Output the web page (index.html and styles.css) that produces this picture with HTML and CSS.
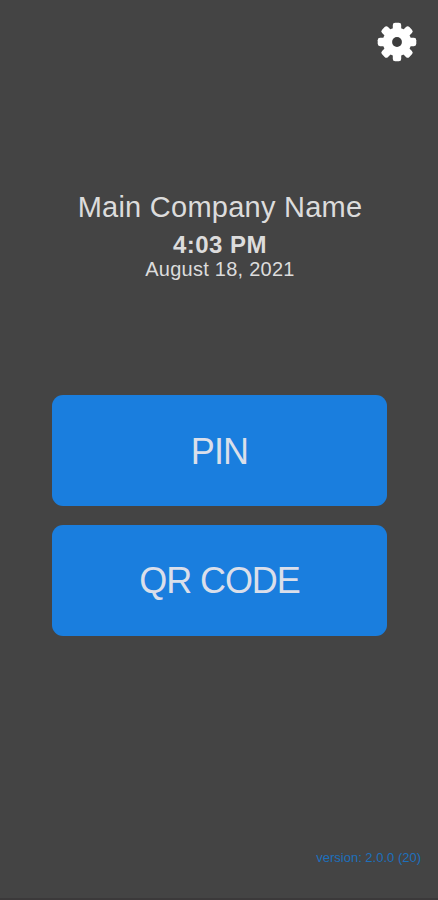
FILE: index.html
```html
<!DOCTYPE html>
<html lang="en">
<head>
<meta charset="utf-8">
<title>Main Company Name</title>
<link rel="stylesheet" href="styles.css">
</head>
<body>
<div class="screen">
  <header class="topbar">
    <button class="settings" aria-label="Settings">
      <svg viewBox="-20 -20 40 40">
        <g class="teeth">
          <rect id="tooth" x="-4.2" y="-19.3" width="8.4" height="38.6" rx="2.4"/>
          <use href="#tooth" transform="rotate(45)"/>
          <use href="#tooth" transform="rotate(90)"/>
          <use href="#tooth" transform="rotate(135)"/>
          <circle r="14.2"/>
        </g>
        <circle class="hub" r="4.9"/>
      </svg>
    </button>
  </header>
  <section class="info">
    <h1 class="company"><span>Main Company Name</span></h1>
    <p class="time"><span>4:03 PM</span></p>
    <p class="date"><span>August 18, 2021</span></p>
  </section>
  <main class="actions">
    <button class="action pin"><span>PIN</span></button>
    <button class="action qr"><span>QR CODE</span></button>
  </main>
  <footer class="version"><span>version: 2.0.0 (20)</span></footer>
</div>
</body>
</html>
```
FILE: styles.css
```css
* { box-sizing: border-box; }
body {
  margin: 0;
  background: #444;
  color: #dcdcdc;
  font-family: "Liberation Sans", Arial, sans-serif;
}
.screen {
  height: 900px;
  display: flex;
  flex-direction: column;
  border-bottom: 2px solid #3b393a;
}
.topbar {
  height: 189px;
  padding: 22px 21px 0 0;
  display: flex;
  justify-content: flex-end;
  align-items: flex-start;
}
.settings {
  width: 40px;
  height: 40px;
  padding: 0;
  border: 0;
  background: none;
}
.settings svg { display: block; width: 40px; height: 40px; }
.teeth { fill: #fff; }
.hub { fill: #3c3c3c; }
.info { height: 206px; text-align: center; padding-left: 2px; }
.company, .time, .date { margin: 0; }
.company { font-size: 29px; line-height: 36px; font-weight: 400; letter-spacing: 0.25px; }
.time { margin-top: 7px; font-size: 24px; line-height: 26px; font-weight: 700; letter-spacing: 0.5px; }
.date { font-size: 20px; line-height: 22px; letter-spacing: 0.25px; }
.actions {
  display: flex;
  flex-direction: column;
  gap: 19px;
  padding: 0 51px 0 52px;
}
.action {
  height: 111px;
  padding: 0;
  border: 0;
  border-radius: 11px;
  background: #1a7ede;
  color: #dadfea;
  font: 36px "Liberation Sans", Arial, sans-serif;
}
.pin { padding-top: 2px; letter-spacing: -0.8px; }
.qr { letter-spacing: -1.1px; }
.version {
  margin-top: auto;
  padding: 0 17px 32px 0;
  text-align: right;
  color: #1d70bd;
  font-size: 13px;
  line-height: 16px;
}
```
